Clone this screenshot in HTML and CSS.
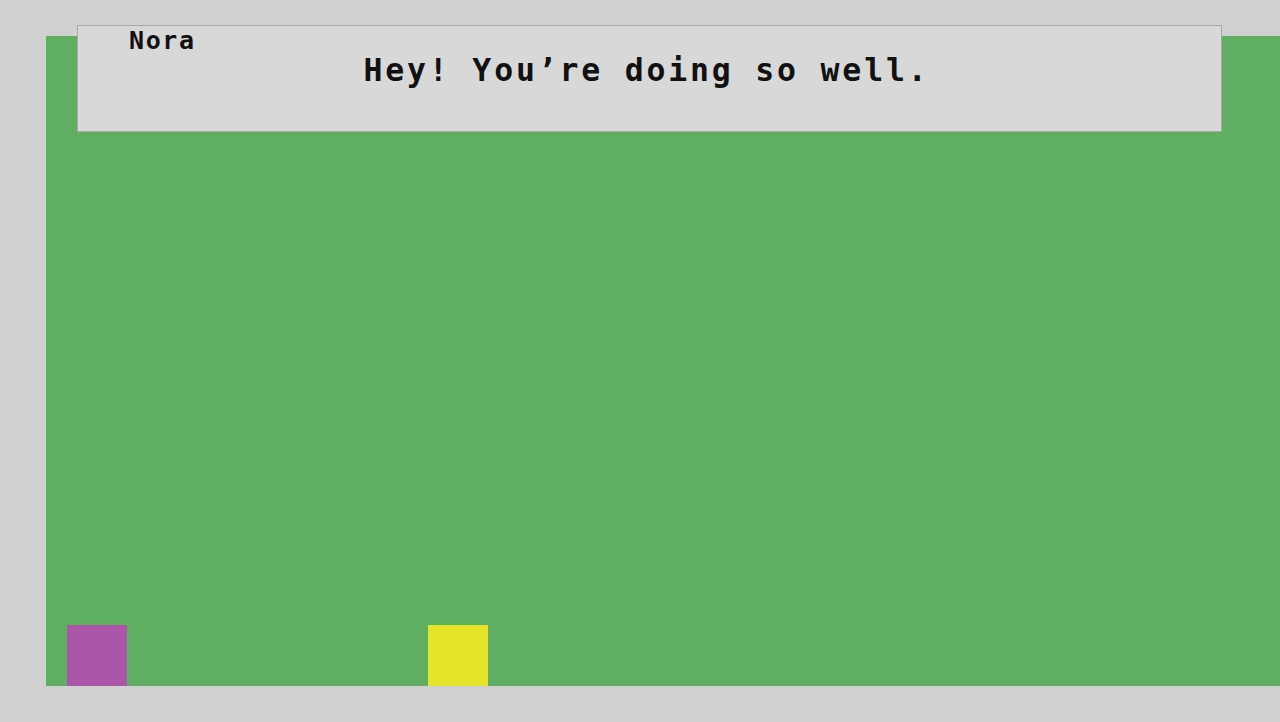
FILE: index.html
```html
<!DOCTYPE html>
<html>
<head>
<meta charset="utf-8">
<link rel="stylesheet" href="styles.css">
</head>
<body>
<div class="screen">
  <div class="stage">
    <div class="sprite sprite-purple"></div>
    <div class="sprite sprite-yellow"></div>
  </div>
  <div class="dialog">
    <div class="speaker">Nora</div>
    <div class="line">Hey! You’re doing so well.</div>
  </div>
</div>
</body>
</html>
```

FILE: styles.css
```css
html, body {
  margin: 0;
  padding: 0;
  background: #d0d0d0;
  width: 1280px;
  height: 722px;
  overflow: hidden;
}

.screen {
  position: relative;
  width: 1280px;
  height: 722px;
  padding-top: 36px;
  padding-left: 46px;
  box-sizing: border-box;
}

.stage {
  position: relative;
  width: 1234px;
  height: 650px;
  background: #60ae62;
}

.sprite {
  position: absolute;
  bottom: 0;
  width: 60px;
  height: 61px;
}

.sprite-purple {
  left: 21px;
  background: #ab55a9;
}

.sprite-yellow {
  left: 382px;
  background: #e4e428;
}

.dialog {
  position: absolute;
  left: 77px;
  top: 25px;
  width: 1145px;
  height: 107px;
  box-sizing: border-box;
  padding-top: 2px;
  background: #d8d8d8;
  border: 1px solid #a9a9a9;
  display: flex;
  flex-direction: column;
  font-family: "DejaVu Sans Mono", "Liberation Mono", monospace;
  font-weight: bold;
  color: #111;
}

.speaker {
  padding-left: 51px;
  font-size: 25px;
  line-height: 25px;
  letter-spacing: 1.6px;
}

.line {
  margin-top: 1px;
  padding-right: 6px;
  text-align: center;
  font-size: 31.5px;
  line-height: 32px;
  letter-spacing: 2.8px;
}
```
